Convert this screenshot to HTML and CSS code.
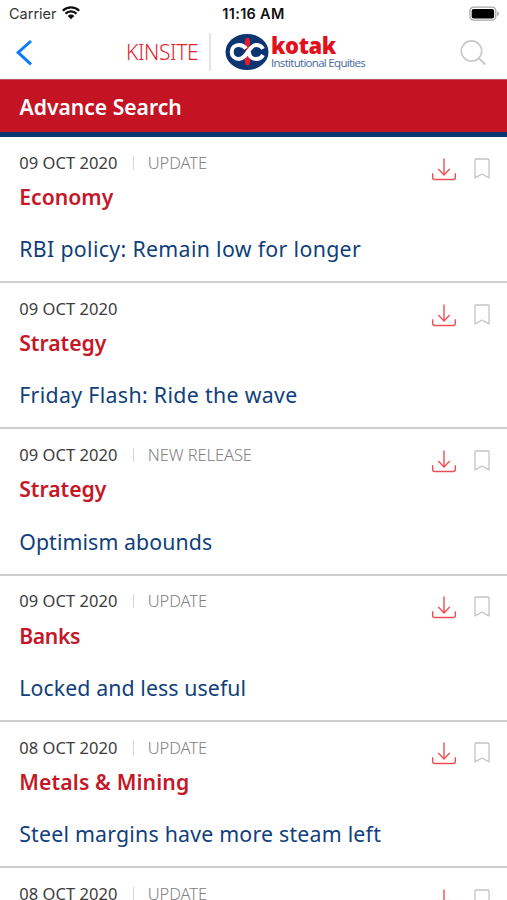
FILE: index.html
```html
<!DOCTYPE html>
<html lang="en">
<head>
<meta charset="utf-8">
<meta name="viewport" content="width=device-width, initial-scale=1">
<title>Kinsite</title>
<link rel="stylesheet" href="styles.css">
</head>
<body>
<svg class="symbols" aria-hidden="true">
  <symbol id="download" viewBox="0 0 26 26"><path d="M13 2.5v16.3M7.3 13l5.7 5.9 5.7-5.9M1.7 17.3v4.2q0 2 2 2h18.6q2 0 2-2v-4.2" fill="none" stroke="#ee4f57" stroke-width="1.4"/></symbol>
  <symbol id="bookmark" viewBox="0 0 18 24"><path d="M3 3h12q1 0 1 1v17.900L9 18l-7 3.900V4q0-1 1-1z" fill="none" stroke="#c4c4c4" stroke-width="1.3" stroke-linejoin="round"/></symbol>
</svg>
<div class="screen">
  <div class="status">
    <div class="carrier"><span class="carrier-name">Carrier</span>
      <svg class="wifi" width="18" height="14" viewBox="0 0 18 14"><path d="M.8 4.8a11.7 11.7 0 0 1 16.4 0M3.5 7.6a7.8 7.8 0 0 1 11 0" fill="none" stroke="#111" stroke-width="2.3"/><path d="M5.7 9.9a4.7 4.7 0 0 1 6.6 0L9 13.3z" fill="#111"/></svg>
    </div>
    <div class="time">11:16 AM</div>
    <svg class="battery" width="31" height="16" viewBox="0 0 31 16"><rect x="1" y="1.2" width="25.8" height="12.9" rx="3.6" fill="#fff" stroke="#a8a8a8" stroke-width="1.3"/><rect x="2.7" y="2.9" width="22.4" height="9.5" rx="2" fill="#000"/><path d="M28.2 5.2q1.8.7 1.8 2.4t-1.8 2.4z" fill="#a8a8a8"/></svg>
  </div>
  <div class="nav">
    <svg class="back" width="20" height="30" viewBox="0 0 20 30"><path d="M17 3 4.2 14.5 17 26.3" fill="none" stroke="#087bfa" stroke-width="3"/></svg>
    <div class="product">KINSITE</div>
    <div class="rule"></div>
    <svg class="emblem" width="44" height="38" viewBox="0 0 44 38">
      <ellipse cx="22" cy="19" rx="21.5" ry="18" fill="#0b3470"/>
      <path d="M22.5 5v27M19.8 9.500h5.400M19.8 28h5.400" stroke="#e31b2b" stroke-width="4"/>
      <path d="M21 15.500c-2-2.600-4.300-3.600-7-3.600-4.300 0-7.300 3.100-7.300 7s3 7 7.300 7c8.500 0 9.500-14 17-14 3.400 0 5.700 1.300 7 4M38 22c-1.300 2.600-3.600 4-7 4-4.600 0-7-3-7-7" fill="none" stroke="#fff" stroke-width="4"/>
    </svg>
    <div class="brand"><div class="kotak">kotak</div><div class="division">Institutional Equities</div></div>
    <svg class="search" width="28" height="28" viewBox="0 0 28 28"><circle cx="12.5" cy="12" r="10.2" fill="none" stroke="#c9c9c9" stroke-width="1.7"/><path d="m19.8 19.3 6.500 6.200" stroke="#c9c9c9" stroke-width="2"/></svg>
  </div>
  <div class="banner"><span class="banner-title">Advance Search</span></div>
  <main class="list">
    <article class="card"><div class="meta"><span class="date">09 OCT 2020</span><span class="kind">UPDATE</span></div><h2 class="topic">Economy</h2><p class="headline">RBI policy: Remain low for longer</p><div class="actions"><svg class="dl"><use href="#download"/></svg><svg class="bm"><use href="#bookmark"/></svg></div></article>
    <article class="card"><div class="meta"><span class="date">09 OCT 2020</span></div><h2 class="topic">Strategy</h2><p class="headline">Friday Flash: Ride the wave</p><div class="actions"><svg class="dl"><use href="#download"/></svg><svg class="bm"><use href="#bookmark"/></svg></div></article>
    <article class="card"><div class="meta"><span class="date">09 OCT 2020</span><span class="kind">NEW RELEASE</span></div><h2 class="topic">Strategy</h2><p class="headline compact">Optimism abounds</p><div class="actions"><svg class="dl"><use href="#download"/></svg><svg class="bm"><use href="#bookmark"/></svg></div></article>
    <article class="card"><div class="meta"><span class="date">09 OCT 2020</span><span class="kind">UPDATE</span></div><h2 class="topic narrow">Banks</h2><p class="headline compact">Locked and less useful</p><div class="actions"><svg class="dl"><use href="#download"/></svg><svg class="bm"><use href="#bookmark"/></svg></div></article>
    <article class="card"><div class="meta"><span class="date">08 OCT 2020</span><span class="kind">UPDATE</span></div><h2 class="topic wide">Metals &amp; Mining</h2><p class="headline snug">Steel margins have more steam left</p><div class="actions"><svg class="dl"><use href="#download"/></svg><svg class="bm"><use href="#bookmark"/></svg></div></article>
    <article class="card"><div class="meta"><span class="date">08 OCT 2020</span><span class="kind">UPDATE</span></div><div class="actions"><svg class="dl"><use href="#download"/></svg><svg class="bm"><use href="#bookmark"/></svg></div></article>
  </main>
</div>
</body>
</html>
```
FILE: styles.css
```css
* { box-sizing: border-box; }
body { margin: 0; background: #fff; font-family: "Noto Sans", "Open Sans", sans-serif; }
svg { display: block; flex: none; }
.symbols { position: absolute; width: 0; height: 0; }
.screen { width: 507px; height: 900px; overflow: hidden; display: flex; flex-direction: column; white-space: nowrap; }
.status { height: 28px; flex: none; display: grid; grid-template-columns: 1fr auto 1fr; align-items: center; padding: 0 7px 0 9px; font: 14.5px/28px Inter, sans-serif; color: #333; }
.carrier { display: flex; align-items: center; gap: 5px; }
.wifi { margin-top: -2px; }
.time { font-weight: 600; color: #111; letter-spacing: 0.3px; margin-right: 2px; }
.battery { justify-self: end; margin-top: -1px; }
.nav { height: 51px; flex: none; display: flex; align-items: flex-start; padding: 5px 20px 0 14px; }
.back { margin-top: 5px; }
.product { width: 73px; margin-left: 92px; margin-top: 4px; font-size: 21px; line-height: 30px; font-weight: 300; color: #dc2430; letter-spacing: -0.4px; }
.rule { width: 2px; height: 38px; margin-left: 10px; background: #e4e4e4; }
.emblem { margin-left: 14px; }
.brand { margin-left: 2px; width: 96px; }
.kotak { height: 22px; font-size: 22px; line-height: 25px; font-weight: 900; color: #e2101c; letter-spacing: -0.4px; }
.division { font-size: 11.5px; line-height: 15px; color: #48699a; font-family: "Open Sans", sans-serif; letter-spacing: -0.7px; }
.search { margin-left: auto; margin-top: 6px; }
.banner { height: 58px; flex: none; background: #c41424; border-top: 1px solid #ba5864; border-bottom: 5px solid #06356f; padding: 12px 19.5px 0; }
.banner-title { display: block; font-size: 21.1px; line-height: 30px; font-weight: 600; color: #fff; }
.card { display: grid; grid-template-columns: 1fr auto; grid-template-rows: 24px 30px 30px; height: 146.2px; padding: 13.8px 16.5px 0 19.2px; border-bottom: 2.6px solid #cecece; }
.meta { grid-column: 1; grid-row: 1; display: flex; font-size: 16.5px; line-height: 24px; }
.date { width: 99px; color: #3c3c3c; letter-spacing: 0.05px; }
.kind { margin-left: 14.5px; padding-left: 15px; color: #808080; font-weight: 300; letter-spacing: -0.08px; background: linear-gradient(#d6d6d6, #d6d6d6) 0 5px / 1px 14px no-repeat; }
.topic { grid-column: 1; grid-row: 2; margin: 7.2px 0 0; font-size: 21.2px; line-height: 30px; font-weight: 600; color: #c41829; }
.topic.narrow { letter-spacing: -0.35px; }
.topic.wide { letter-spacing: 0.13px; }
.headline { grid-column: 1; grid-row: 3; margin: 29.4px 0 0; font-size: 21.3px; line-height: 30px; color: #103f7b; letter-spacing: 0.34px; }
.headline.compact { letter-spacing: 0.1px; }
.headline.snug { letter-spacing: 0.22px; }
.actions { grid-column: 2; grid-row: 1; display: flex; margin-top: 4.8px; height: 26px; gap: 16px; }
.dl { width: 26px; height: 26px; }
.bm { width: 18px; height: 24px; }
```
